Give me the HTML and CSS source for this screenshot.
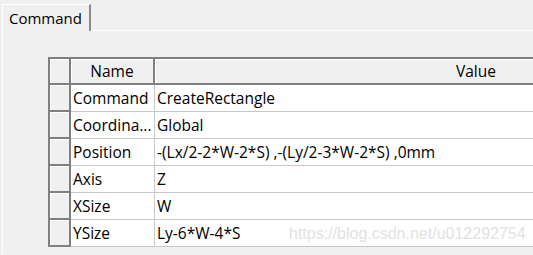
FILE: index.html
```html
<!DOCTYPE html>
<html lang="en">
<head>
    <meta charset="UTF-8">
    <title>Command</title>
    <link rel="stylesheet" href="styles.css">
</head>
<body>
    <div class="tabbar">
        <div class="tab">Command</div>
        <div class="tab-rest"></div>
    </div>
    <div class="panel">
        <div class="grid">
            <div class="hcell corner"></div>
            <div class="hcell">Name</div>
            <div class="hcell value-head">Value</div>

            <div class="sel"></div>
            <div class="cell name">Command</div>
            <div class="cell">CreateRectangle</div>

            <div class="sel"></div>
            <div class="cell name">Coordina...</div>
            <div class="cell">Global</div>

            <div class="sel"></div>
            <div class="cell name">Position</div>
            <div class="cell">-(Lx/2-2*W-2*S) ,-(Ly/2-3*W-2*S) ,0mm</div>

            <div class="sel"></div>
            <div class="cell name">Axis</div>
            <div class="cell">Z</div>

            <div class="sel"></div>
            <div class="cell name">XSize</div>
            <div class="cell">W</div>

            <div class="sel"></div>
            <div class="cell name">YSize</div>
            <div class="cell">Ly-6*W-4*S</div>
        </div>
        <div class="watermark">https://blog.csdn.net/u012292754</div>
    </div>
</body>
</html>
```

FILE: styles.css
```css
body{
    margin: 0;
    background-color: #f0f0f0;
    font-family: "Open Sans", sans-serif;
    font-size: 15px;
    color: #000;
    overflow: hidden;
    height: 255px;
}
.tabbar{
    display: flex;
    padding: 4px 0 0 2px;
}
.tab{
    height: 27px;
    padding: 0 7px 0 6px;
    border-top: 1px solid #fff;
    border-left: 1px solid #fff;
    border-right: 2px solid #8a8a8a;
    box-sizing: border-box;
    line-height: 26px;
}
.tab-rest{
    flex: 1;
    border-bottom: 1px solid #fff;
}
.panel{
    position: relative;
    margin-left: 2px;
    border-left: 1px solid #fff;
    padding: 26px 0 0 45px;
    height: 197px;
    overflow: hidden;
}
.grid{
    display: grid;
    grid-template-columns: 21px 84px 644px;
    grid-auto-rows: 27px;
    grid-template-rows: 26px;
    border-left: 2px solid #808080;
    border-top: 2px solid #808080;
    width: 749px;
    background-color: #fff;
    font-size: 15.5px;
}
.hcell{
    background-color: #f0f0f0;
    border-right: 2px solid #808080;
    border-bottom: 2px solid #808080;
    box-shadow: inset 1px 1px #fff;
    display: flex;
    align-items: center;
    justify-content: center;
    padding-bottom: 1px;
}
.sel{
    background-color: #f0f0f0;
    border-right: 2px solid #808080;
    border-bottom: 2px solid #808080;
    box-shadow: inset 1px 1px #fff;
}
.cell{
    border-bottom: 1px solid #c8c8c8;
    display: flex;
    align-items: center;
    padding-left: 2px;
    white-space: nowrap;
    overflow: hidden;
}
.name{
    border-right: 1px solid #c8c8c8;
}
.watermark{
    position: absolute;
    left: 286px;
    top: 194px;
    font-family: "Liberation Sans", Arial, sans-serif;
    font-size: 16px;
    color: #e2e2e2;
}
```
